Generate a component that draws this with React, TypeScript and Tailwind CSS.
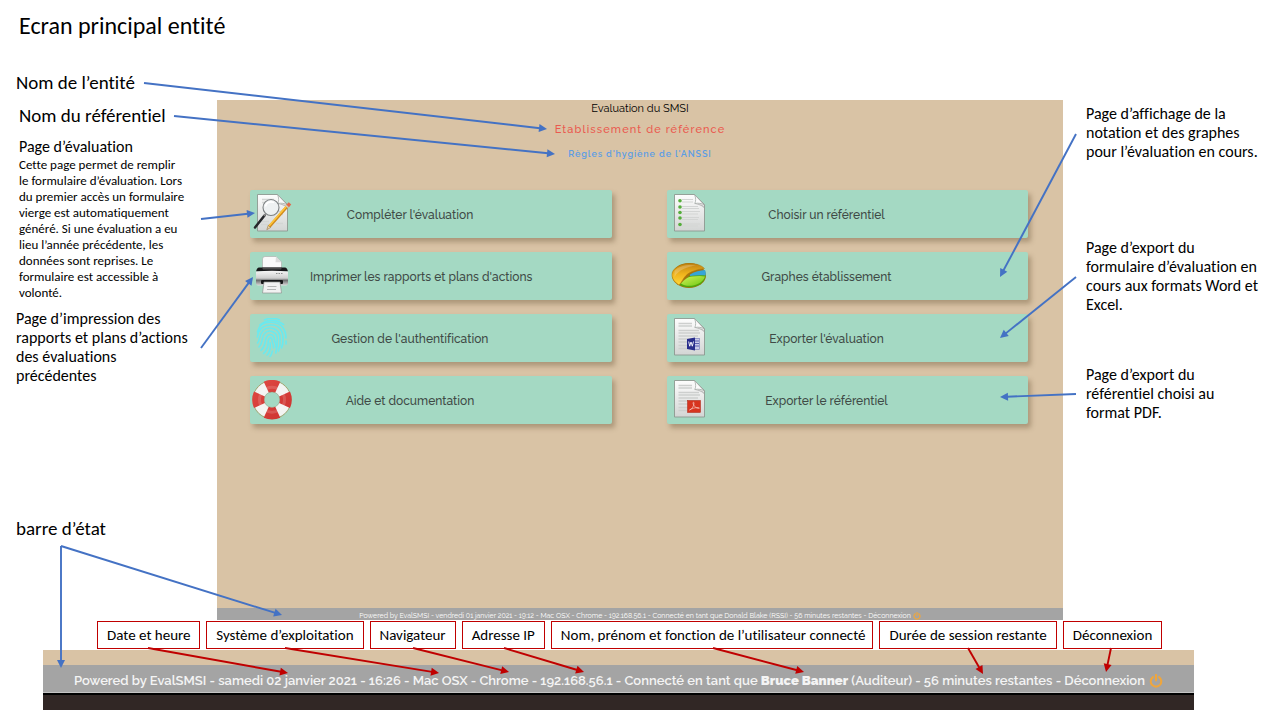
import type { ReactNode } from 'react';

const noteFont = "font-['Carlito','Lato',sans-serif] [font-variant-ligatures:none]";
const appFont = "font-['Raleway','Lato',sans-serif]";

type Line = [number, number, number, number];

const blueArrows: Line[] = [
  [144, 83, 547, 129],
  [174, 116, 555, 154],
  [201, 219, 255, 213],
  [201, 348, 253, 277],
  [1076, 134, 1000, 277],
  [1076, 277, 1000, 338],
  [1076, 394, 1000, 397],
  [61, 546, 61, 668],
  [61, 546, 282, 615],
];

const redArrows: Line[] = [
  [148, 648, 288, 673],
  [285, 648, 439, 673],
  [413, 648, 509, 672],
  [504, 648, 584, 672],
  [713, 648, 804, 672],
  [968, 648, 983, 674],
  [1111, 648, 1106, 672],
];

function Arrow({ line, color }: { line: Line; color: string }) {
  const [x1, y1, x2, y2] = line;
  const angle = Math.atan2(y2 - y1, x2 - x1);
  const bx = x2 - 7 * Math.cos(angle);
  const by = y2 - 7 * Math.sin(angle);
  const deg = (angle * 180) / Math.PI;
  return (
    <g>
      <line x1={x1} y1={y1} x2={bx} y2={by} stroke={color} strokeWidth="1.9" />
      <path d="M0 0L-8 -4V4Z" fill={color} transform={`translate(${x2} ${y2}) rotate(${deg})`} />
    </g>
  );
}

function Sheet({ children }: { children?: ReactNode }) {
  return (
    <>
      <path d="M5.5 0.5H25.5L35.5 10.5V37H5.5Z" fill="url(#paper)" stroke="#8d9891" strokeWidth="0.9" strokeLinejoin="round" />
      {children}
      <path d="M25.5 0.5C27 4 27 7 25.8 9.6C29 8.8 33 9.2 35.5 11.2Z" fill="#fbfbfb" stroke="#99a19c" strokeWidth="0.7" strokeLinejoin="round" />
      <path d="M26 10C29 9.4 33 10 35 12.5V14C32 11.4 29 10.6 26 10Z" fill="#9a9a9a" opacity="0.6" />
    </>
  );
}

function TextLines() {
  return <path d="M9.5 5.5H23M9.5 8H23M9.5 12.5H30M9.5 15H31M9.5 18H29M9.5 21H31M9.5 24H27M9.5 27.5H28M9.5 30.5H25" stroke="#cdcfce" strokeWidth="1.3" />;
}

function IconFrame({ children }: { children: ReactNode }) {
  return (
    <svg viewBox="0 0 40 40" className="ml-[2px] size-10 shrink-0" aria-hidden="true">
      {children}
    </svg>
  );
}

function EvaluateIcon() {
  return (
    <IconFrame>
      <Sheet>
        <path d="M10 5.5H22M10 8.5H14M27 17.5H32M26 20.5H31M24 29.5H31M9 27.5H17M9 30.5H19" stroke="#d3d5d4" strokeWidth="1.3" />
      </Sheet>
      <path d="M12.5 21.5L3 33.5" stroke="#25272a" strokeWidth="2.5" strokeLinecap="round" />
      <path d="M14.5 19L12 22" stroke="#8a8a8a" strokeWidth="1.6" />
      <circle cx="19" cy="13.5" r="8" fill="#eef1f2" fillOpacity="0.92" stroke="#7d8183" strokeWidth="1.1" />
      <path d="M13.5 12.5C14 8.500 18 7 22 8.5" stroke="#fff" strokeWidth="1.8" fill="none" />
      <path d="M36.5 11L17.5 32.5" stroke="#d08a1c" strokeWidth="2.8" />
      <path d="M36 10.5L17 32" stroke="#ffc53a" strokeWidth="1.6" />
      <path d="M18.6 33.5L14.8 35.7L16.2 31.4Z" fill="#ecd3a4" stroke="#8d6931" strokeWidth="0.5" />
      <path d="M38 9.3L35.6 12" stroke="#e2694c" strokeWidth="3.4" />
      <path d="M35.6 12L34.7 13" stroke="#c9cccd" strokeWidth="3.1" />
    </IconFrame>
  );
}

function PrinterIcon() {
  return (
    <IconFrame>
      <path d="M10.5 15V3Q10.5 0.5 13 0.5H24L29.5 6V15Z" fill="#fafafa" stroke="#a7aaa8" strokeWidth="0.6" />
      <path d="M24 0.5L23.5 6.3H29.5Z" fill="#dcdcdc" />
      <path d="M7 11.5H33Q35 11.5 36 15.5H4Q5 11.5 7 11.5Z" fill="#17181a" />
      <path d="M10 11.5L11 13.5H29L30 11.5Z" fill="#4c4c4c" />
      <path d="M4 15.5Q20 14 36 15.5V27.5Q36 29.5 34 29.5H6Q4 29.5 4 27.5Z" fill="url(#metal)" />
      <path d="M24 17.5H31" stroke="#8e9190" strokeWidth="1" strokeDasharray="1.5 1" />
      <rect x="9" y="24" width="22" height="4" rx="1" fill="#161718" />
      <path d="M12 26H28L29.5 37H10.5Z" fill="#f1f1f1" stroke="#8f9391" strokeWidth="0.7" />
      <path d="M15.5 30.5H24.5M15 33.5H24" stroke="#b4b6b5" strokeWidth="1.2" />
    </IconFrame>
  );
}

function FingerprintIcon() {
  return (
    <IconFrame>
      <g fill="none" stroke="#6ae9ef" strokeWidth="1.6" strokeLinecap="round">
        <path d="M12.5 1.8Q20 -1.2 27.5 1.8" />
        <path d="M8 7Q19.5 -2 31.5 6.5" />
        <path d="M5.5 14C7 6 14 4 20 4.3C29 4.8 34 11 34 20" />
        <path d="M5.3 19C6 12 11 7 19 7C27 7 31 12.5 31 20C31.2 24 31 27 29.5 30" />
        <path d="M5.5 25C8.5 22 6.5 17 11 12.5C17 7.5 28 10.5 28 20C28.5 25 28 29 26.5 33" />
        <path d="M7 29C12 24 9 19 12.5 15.5C17 10.5 25.5 14 25.3 21C25.5 27 25 30 23.8 35" />
        <path d="M9 32.5C14.5 27 12.5 22.5 14.5 19C17 14.5 22.5 16.5 22.5 22C22.7 24 24.5 26 24 29" />
        <path d="M11.5 35.5C17.5 30 15.5 25.5 16.5 22C17.5 18.5 20 19.5 20 22C20 25 21.8 26.5 21.5 30" />
        <path d="M15 37C18.5 34 18.5 30 18.2 25M18 38.5C20.5 36 19.5 34 20.5 33" />
        <path d="M34 23V26" />
      </g>
    </IconFrame>
  );
}

function LifebuoyIcon() {
  return (
    <IconFrame>
      <circle cx="20" cy="19.7" r="19" fill="none" stroke="#a89f6a" strokeWidth="1" />
      <circle cx="20" cy="19.7" r="13.2" fill="none" stroke="#f4f4f2" strokeWidth="10.6" />
      <circle cx="20" cy="19.7" r="13.8" fill="none" stroke="url(#buoy)" strokeWidth="12" pathLength="8" strokeDasharray="1.1 0.9" strokeDashoffset="0.55" />
      <circle cx="20" cy="19.7" r="12.5" fill="none" stroke="#fff" strokeOpacity="0.15" strokeWidth="3" />
      <circle cx="20" cy="19.7" r="7.8" fill="none" stroke="#8d7d5c" strokeOpacity="0.5" strokeWidth="0.7" />
    </IconFrame>
  );
}

function ListIcon() {
  return (
    <IconFrame>
      <Sheet>
        <path d="M13 5.5H24M13 8H24M13 12.5H29M13 14.5H30M13 17.5H31M13 20H29M13 23.5H30M13 25.5H29M13 30H31M13 32H29" stroke="#d3d5d4" strokeWidth="1.2" />
        <g fill="#55ad3b">
          <circle cx="11" cy="6.8" r="1.8" />
          <circle cx="11" cy="13" r="1.8" />
          <circle cx="11" cy="18.5" r="1.8" />
          <circle cx="11" cy="24" r="1.8" />
          <circle cx="11" cy="30.5" r="1.8" />
        </g>
      </Sheet>
    </IconFrame>
  );
}

function PieIcon() {
  return (
    <IconFrame>
      <ellipse cx="20" cy="19.5" rx="17" ry="12.5" fill="#a8730c" />
      <path d="M10.5 28.5C14 32.5 29 33 34.5 25C36.5 22 36.5 20 36.5 18.5L21 19.5Z" fill="#4fa80c" />
      <path d="M12 27.5C18 32 33 30 36 20.5C32 19.5 27 20 23 20.5C18 21 15 24 12 27.5Z" fill="url(#pieGreen)" />
      <path d="M21 18.5C26 15.5 31 14.5 36 14C37 16 37 18 36.5 19.5C31 19 26 19.5 21 20Z" fill="#35a5d8" />
      <path d="M10 29C2 24 1 17 6 12.5C13 6 29 5.5 35.5 12.5C28 13.5 21 15.5 17 19.5C14 22.5 13 26 10 29Z" fill="url(#pieGold)" stroke="#a9760f" strokeWidth="0.5" />
      <path d="M5.5 15C10 9.5 20 8 27 9.5C19 10.5 9 14 5.5 21Z" fill="#fff" opacity="0.22" />
    </IconFrame>
  );
}

function WordIcon() {
  return (
    <IconFrame>
      <Sheet>
        <TextLines />
      </Sheet>
      <rect x="25" y="20.5" width="5.5" height="11" fill="#c9cbea" stroke="#6f73b8" strokeWidth="0.6" />
      <path d="M26 23H30M26 25.5H30M26 28H30" stroke="#5a5fae" strokeWidth="1" />
      <path d="M18 21L26 19.5V32.5L18 31Z" fill="#292d8c" />
      <path d="M19.7 23.5L20.7 28.2L22 24L23.3 28.2L24.5 23.5" fill="none" stroke="#fff" strokeWidth="0.9" />
    </IconFrame>
  );
}

function PdfIcon() {
  return (
    <IconFrame>
      <Sheet>
        <TextLines />
      </Sheet>
      <rect x="18.5" y="20.5" width="13" height="12" fill="#d7341f" stroke="#a92415" strokeWidth="0.5" />
      <path d="M20.5 30C23 29 25 26 25 23C25 22 24 22 24 23C24.3 25.5 26.5 28 29.5 28.5C31 28.5 30.5 27.4 29 27.5C26 27.5 23 28.5 20.5 30Z" fill="none" stroke="#f8c9c0" strokeWidth="0.7" />
    </IconFrame>
  );
}

function PowerIcon({ className }: { className: string }) {
  return (
    <svg viewBox="0 0 16 16" className={className} aria-hidden="true">
      <path d="M4.5 3.5A6 6 0 1 0 11.5 3.5M8 1V7.5" fill="none" stroke="#f0a63c" strokeWidth="2.4" strokeLinecap="round" />
    </svg>
  );
}

const cards: { label: string; icon: ReactNode }[] = [
  { label: "Compléter l'évaluation", icon: <EvaluateIcon /> },
  { label: 'Choisir un référentiel', icon: <ListIcon /> },
  { label: "Imprimer les rapports et plans d'actions", icon: <PrinterIcon /> },
  { label: 'Graphes établissement', icon: <PieIcon /> },
  { label: "Gestion de l'authentification", icon: <FingerprintIcon /> },
  { label: "Exporter l'évaluation", icon: <WordIcon /> },
  { label: 'Aide et documentation', icon: <LifebuoyIcon /> },
  { label: 'Exporter le référentiel', icon: <PdfIcon /> },
];

const legend = [
  'Date et heure',
  'Système d’exploitation',
  'Navigateur',
  'Adresse IP',
  'Nom, prénom et fonction de l’utilisateur connecté',
  'Durée de session restante',
  'Déconnexion',
];

export default function App() {
  return (
    <div className={`relative bg-white pb-[10px] text-black ${noteFont}`}>
      <svg className="absolute size-0" aria-hidden="true">
        <defs>
          <linearGradient id="paper" x1="0" y1="0" x2="0" y2="1">
            <stop offset="0" stopColor="#fdfdfd" />
            <stop offset="1" stopColor="#d3d5d4" />
          </linearGradient>
          <linearGradient id="metal" x1="0" y1="0" x2="0" y2="1">
            <stop offset="0" stopColor="#f6f6f6" />
            <stop offset="0.5" stopColor="#cfcfcf" />
            <stop offset="0.65" stopColor="#6d6f6f" />
            <stop offset="1" stopColor="#dcdcdc" />
          </linearGradient>
          <linearGradient id="buoy" x1="0" y1="0" x2="1" y2="1">
            <stop offset="0" stopColor="#dd4640" />
            <stop offset="1" stopColor="#cf3633" />
          </linearGradient>
          <linearGradient id="pieGold" x1="0" y1="0" x2="0" y2="1">
            <stop offset="0" stopColor="#c08212" />
            <stop offset="0.5" stopColor="#f0b41c" />
            <stop offset="1" stopColor="#ffd83a" />
          </linearGradient>
          <linearGradient id="pieGreen" x1="0" y1="0" x2="1" y2="1">
            <stop offset="0" stopColor="#d2f25a" />
            <stop offset="1" stopColor="#6cc812" />
          </linearGradient>
        </defs>
      </svg>

      <header className="pt-[10px] pb-[30px] pl-[19px]">
        <h1 className="text-2xl leading-8">Ecran principal entité</h1>
      </header>

      <main className="grid grid-cols-[217fr_846fr_217fr]">
        <aside className="min-w-0 pl-4 whitespace-nowrap">
          <p className="text-[19px] leading-[22px]">Nom de l’entité</p>
          <p className="mt-[11px] pl-[3px] text-[19px] leading-[22px]">Nom du référentiel</p>
          <section className="mt-[10px] pl-[3px]">
            <h2 className="text-[16px] leading-5">Page d’évaluation</h2>
            <p className="text-[13px] leading-4">
              Cette page permet de remplir<br />
              le formulaire d’évaluation. Lors<br />
              du premier accès un formulaire<br />
              vierge est automatiquement<br />
              généré. Si une évaluation a eu<br />
              lieu l’année précédente, les<br />
              données sont reprises. Le<br />
              formulaire est accessible à<br />
              volonté.
            </p>
          </section>
          <p className="mt-2 text-[16px] leading-[19px]">
            Page d’impression des<br />
            rapports et plans d’actions<br />
            des évaluations<br />
            précédentes
          </p>
          <p className="mt-[133px] text-[19px] leading-[22px]">barre d’état</p>
        </aside>

        <section className={`mt-7 flex min-h-[520px] min-w-0 flex-col bg-[#d9c3a5] ${appFont}`}>
          <div className="pt-[2px] text-center">
            <h2 className="text-[11px] leading-[14px]">Evaluation du SMSI</h2>
            <p className="mt-[6px] text-[11px] leading-4 font-medium tracking-widest text-[#ea5a4f]">Etablissement de référence</p>
            <p className="mt-2 text-[9px] leading-4 font-semibold tracking-widest text-[#5c9de4]">Règles d'hygiène de l'ANSSI</p>
          </div>
          <nav className="mt-7 grid grid-cols-2 gap-x-[55px] gap-y-[14px] pr-[35px] pl-[33px]">
            {cards.map((card) => (
              <a
                key={card.label}
                href="#"
                className="flex h-12 items-center gap-[18px] rounded-[2px] bg-[#a4d9c3] text-[12px] font-medium text-[#3f4a46] shadow-[3px_4px_5px_rgba(90,70,40,0.35)]"
              >
                {card.icon}
                <span className="min-w-[200px] pt-[2px] text-center whitespace-nowrap">{card.label}</span>
              </a>
            ))}
          </nav>
          <footer className="mt-auto flex h-3 items-center justify-center gap-[2px] bg-[#a4a4a4] pt-[3px] text-[7px] leading-none whitespace-nowrap text-white">
            <span>
              Powered by EvalSMSI - vendredi 01 janvier 2021 - 19:12 - Mac OSX - Chrome - 192.168.56.1 - Connecté en tant que Donald Blake (RSSI) - 56 minutes restantes - Déconnexion
            </span>
            <PowerIcon className="size-2 shrink-0" />
          </footer>
        </section>

        <aside className="min-w-0 pt-8 pl-[23px] text-[16px] leading-[19px] whitespace-nowrap">
          <p>
            Page d’affichage de la<br />
            notation et des graphes<br />
            pour l’évaluation en cours.
          </p>
          <p className="mt-[77px]">
            Page d’export du<br />
            formulaire d’évaluation en<br />
            cours aux formats Word et<br />
            Excel.
          </p>
          <p className="mt-[51px]">
            Page d’export du<br />
            référentiel choisi au<br />
            format PDF.
          </p>
        </aside>
      </main>

      <ul className="mt-px mr-[118px] ml-[97px] grid grid-cols-[103fr_157fr_86fr_83fr_322fr_177fr_99fr] gap-x-[6px]">
        {legend.map((item) => (
          <li key={item} className="h-7 border border-[#c00000] pl-[9px] text-[15px] leading-[26px] whitespace-nowrap">
            {item}
          </li>
        ))}
      </ul>

      <section className={`mt-px mr-[86px] ml-[43px] ${appFont}`}>
        <div className="h-[15px] bg-[#d9c3a5]" />
        <div className="flex h-7 items-center justify-center gap-1 border-b border-[#c4c4c4] bg-[#a4a4a4] pt-1 text-[13px] leading-none font-semibold whitespace-nowrap text-[#f4f4f4]">
          <span>
            Powered by EvalSMSI - samedi 02 janvier 2021 - 16:26 - Mac OSX - Chrome - 192.168.56.1 - Connecté en tant que <b>Bruce Banner</b> (Auditeur) - 56 minutes restantes - Déconnexion
          </span>
          <PowerIcon className="size-[14px] shrink-0" />
        </div>
        <div className="h-[17px] border-t-2 border-black bg-[#312725]" />
      </section>

      <svg viewBox="0 0 1280 720" preserveAspectRatio="none" className="pointer-events-none absolute inset-0 size-full" aria-hidden="true">
        {blueArrows.map((line) => (
          <Arrow key={line.join()} line={line} color="#4472c4" />
        ))}
        {redArrows.map((line) => (
          <Arrow key={line.join()} line={line} color="#c00000" />
        ))}
      </svg>
    </div>
  );
}
